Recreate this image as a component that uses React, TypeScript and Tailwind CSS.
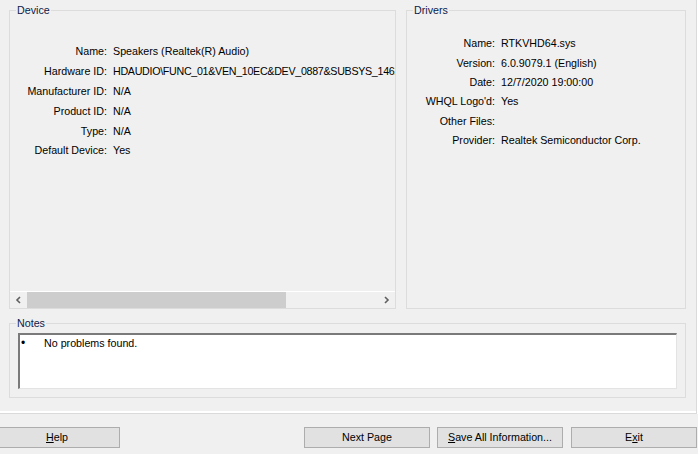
import React from "react";

interface Field {
  label: string;
  value: string;
  tight?: boolean;
}

const deviceFields: Field[] = [
  { label: "Name:", value: "Speakers (Realtek(R) Audio)" },
  { label: "Hardware ID:", value: "HDAUDIO\\FUNC_01&VEN_10EC&DEV_0887&SUBSYS_14621CB4&REV_1003", tight: true },
  { label: "Manufacturer ID:", value: "N/A" },
  { label: "Product ID:", value: "N/A" },
  { label: "Type:", value: "N/A" },
  { label: "Default Device:", value: "Yes" },
];

const driverFields: Field[] = [
  { label: "Name:", value: "RTKVHD64.sys" },
  { label: "Version:", value: "6.0.9079.1 (English)" },
  { label: "Date:", value: "12/7/2020 19:00:00" },
  { label: "WHQL Logo'd:", value: "Yes" },
  { label: "Other Files:", value: "" },
  { label: "Provider:", value: "Realtek Semiconductor Corp." },
];

// caption sits on the top border of the box
const GroupBox = ({
  title,
  className,
  children,
}: {
  title: string;
  className: string;
  children: React.ReactNode;
}) => (
  <div className={`relative border border-[#dcdcdc] ${className}`}>
    <span className="absolute left-[6px] top-[-8px] bg-[#f0f0f0] px-[1px] leading-[14px] text-[#0c1a4a]">
      {title}
    </span>
    {children}
  </div>
);

const FieldList = ({ fields, labelWidth, rowHeight }: { fields: Field[]; labelWidth: string; rowHeight: string }) => (
  <div className="flex flex-col">
    {fields.map((f) => (
      <div key={f.label} className={`flex ${rowHeight} items-center whitespace-nowrap leading-[13px]`}>
        <span className={`${labelWidth} shrink-0 text-right`}>{f.label}</span>
        <span className={`ml-[6px] ${f.tight ? "tracking-[-0.3px]" : ""}`}>{f.value}</span>
      </div>
    ))}
  </div>
);

const Button = ({ children, className = "" }: { children: React.ReactNode; className?: string }) => (
  <button className={`h-[21px] w-[126px] shrink-0 border border-[#adadad] bg-[#e1e1e1] text-center leading-[19px] ${className}`}>
    {children}
  </button>
);

export default function App() {
  return (
    <div
      className="flex h-[454px] w-[698px] flex-col overflow-hidden bg-[#f0f0f0] text-[10.7px] text-black"
      style={{ fontFamily: '"Liberation Sans", Arial, sans-serif' }}
    >
      {/* tab page */}
      <div className="h-[414px] w-[697px] shrink-0 border-b border-r border-b-[#dadada] border-r-[#dadada] pt-[10px] pl-[9px] shadow-[1px_0_0_#ffffff,inset_0_-2px_0_#ffffff]">
        <div className="flex gap-[10px]">
          <GroupBox title="Device" className="flex h-[299px] w-[387px] flex-col">
            <div className="flex-1 overflow-hidden pt-[31px]">
              <FieldList fields={deviceFields} labelWidth="w-[97px]" rowHeight="h-[19.8px]" />
            </div>
            {/* horizontal scrollbar */}
            <div className="flex h-[17px] border-t border-t-white">
              <div className="flex w-[17px] items-center justify-center">
                <svg width="7" height="8" viewBox="0 0 7 8">
                  <path d="M5 1 L2 4 L5 7" fill="none" stroke="#606060" strokeWidth="1.6" />
                </svg>
              </div>
              <div className="flex flex-1">
                <div className="w-[259px] bg-[#cdcdcd]" />
              </div>
              <div className="flex w-[17px] items-center justify-center">
                <svg width="7" height="8" viewBox="0 0 7 8">
                  <path d="M2 1 L5 4 L2 7" fill="none" stroke="#606060" strokeWidth="1.6" />
                </svg>
              </div>
            </div>
          </GroupBox>

          <GroupBox title="Drivers" className="h-[299px] w-[280px] pt-[23px]">
            <FieldList fields={driverFields} labelWidth="w-[88px]" rowHeight="h-[19.4px]" />
          </GroupBox>
        </div>

        <GroupBox title="Notes" className="mt-[14px] h-[75px] w-[677px] px-[8px] pt-[9px]">
          <div className="flex h-[56px] w-[659px] items-start border-l-2 border-t-2 border-r border-b border-l-[#7a7a7a] border-t-[#7a7a7a] border-r-[#e3e3e3] border-b-[#e3e3e3] bg-white pt-[1px]">
            <span className="w-[24px] pl-[1px] text-[12px] leading-[14px]">•</span>
            <span className="leading-[14px]">No problems found.</span>
          </div>
        </GroupBox>
      </div>

      {/* bottom buttons */}
      <div className="mt-[13px] flex">
        <Button className="ml-[-6px]">
          <span className="underline">H</span>elp
        </Button>
        <Button className="ml-[184px]">Next Page</Button>
        <Button className="ml-[7px]">
          <span className="underline">S</span>ave All Information...
        </Button>
        <Button className="ml-[8px]">
          E<span className="underline">x</span>it
        </Button>
      </div>
    </div>
  );
}
